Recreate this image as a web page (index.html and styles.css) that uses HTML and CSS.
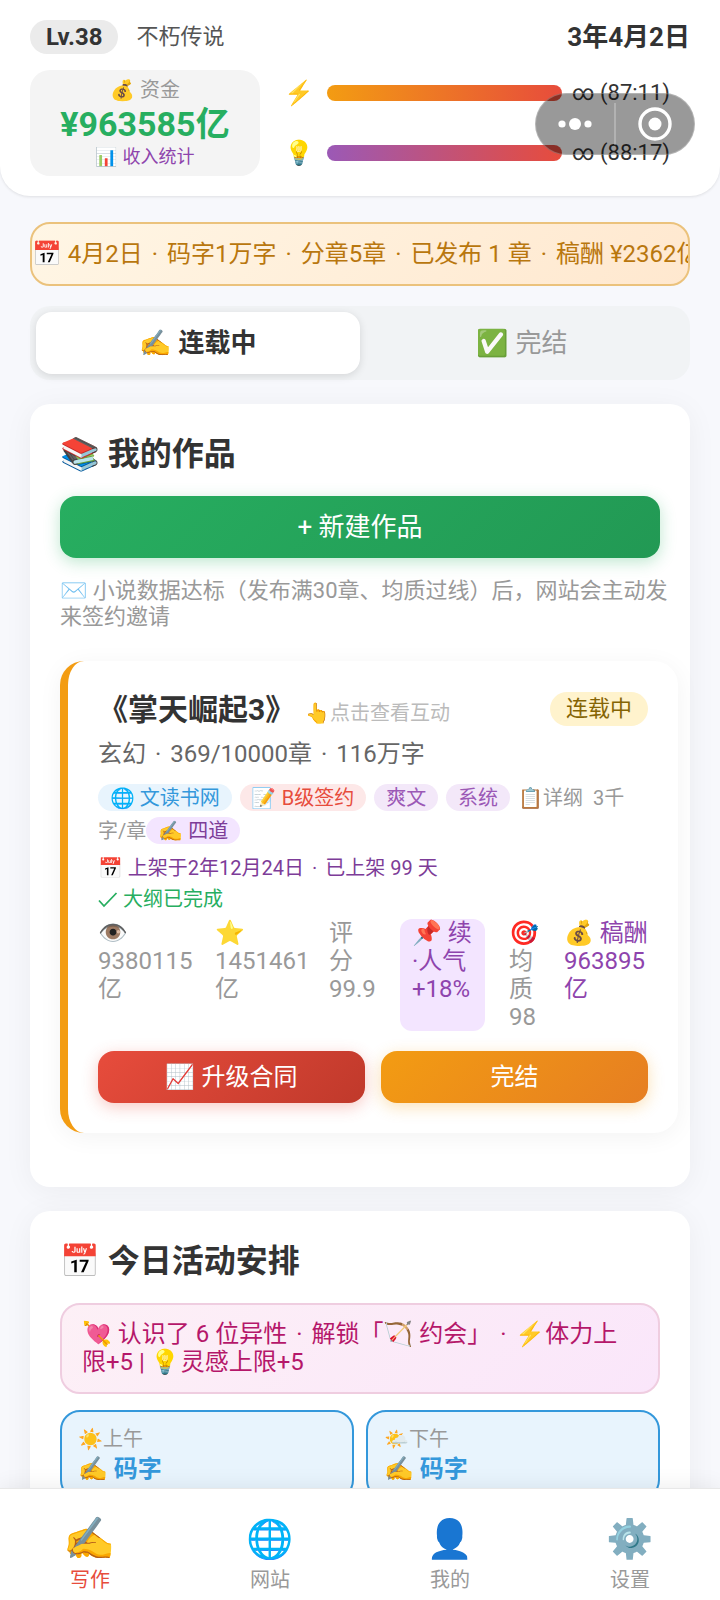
FILE: index.html
```html
<!DOCTYPE html>
<html lang="zh-CN">
<head>
    <meta charset="UTF-8">
    <meta name="viewport" content="width=device-width, initial-scale=1.0">
    <title>写作</title>
    <link rel="stylesheet" href="styles.css">
</head>
<body>

    <header class="header">
        <div class="header-top">
            <span class="level">Lv.38</span>
            <span class="rank">不朽传说</span>
            <span class="date">3年4月2日</span>
        </div>
        <div class="header-stats">
            <div class="money">
                <span class="money-label">💰 资金</span>
                <strong class="money-value">¥963585亿</strong>
                <a class="money-link" href="#income">📊 收入统计</a>
            </div>
            <div class="bars">
                <div class="bar-row">
                    <span class="bar-icon">⚡</span>
                    <div class="bar bar-energy"></div>
                    <span class="bar-text">∞ (87:11)</span>
                </div>
                <div class="bar-row">
                    <span class="bar-icon">💡</span>
                    <div class="bar bar-idea"></div>
                    <span class="bar-text">∞ (88:17)</span>
                </div>
            </div>
        </div>
        <!-- Mini program capsule, floats over the bars -->
        <div class="capsule">
            <button class="capsule-btn" aria-label="更多">
                <svg width="36" height="36" viewBox="0 0 36 36" fill="#fff">
                    <circle cx="5" cy="18" r="3.6"/>
                    <circle cx="18" cy="18" r="6"/>
                    <circle cx="31" cy="18" r="3.6"/>
                </svg>
            </button>
            <button class="capsule-btn" aria-label="关闭">
                <svg width="36" height="36" viewBox="0 0 36 36">
                    <circle cx="18" cy="18" r="15" fill="none" stroke="#fff" stroke-width="3.4"/>
                    <circle cx="18" cy="18" r="6.5" fill="#fff"/>
                </svg>
            </button>
        </div>
    </header>

    <main class="content">
        <div class="notice">📅 4月2日 <i class="dot">·</i> 码字1万字 <i class="dot">·</i> 分章5章 <i class="dot">·</i> 已发布 1 章 <i class="dot">·</i> 稿酬 ¥2362亿</div>

        <div class="tabs">
            <button class="tab active">✍️ 连载中</button>
            <button class="tab">✅ 完结</button>
        </div>

        <section class="card">
            <h2 class="card-title">📚 我的作品</h2>
            <button class="btn btn-new">+ 新建作品</button>
            <div class="works">
                <p class="tip">✉️ 小说数据达标（发布满30章、均质过线）后，网站会主动发来签约邀请</p>
                <article class="novel">
                    <div class="novel-head">
                        <h3 class="novel-title">《掌天崛起3》</h3>
                        <a class="novel-hint" href="#novel">👆点击查看互动</a>
                        <span class="status">连载中</span>
                    </div>
                    <p class="novel-meta">玄幻 <i class="dot">·</i> 369/10000章 <i class="dot">·</i> 116万字</p>
                    <p class="novel-tags">
                        <span class="tag tag-blue">🌐 文读书网</span>
                        <span class="tag tag-red">📝 B级签约</span>
                        <span class="tag tag-purple">爽文</span>
                        <span class="tag tag-purple">系统</span>
                        <span class="tag-plain">📋详纲</span>&nbsp; 3千<br>字/章<span class="tag tag-style">✍️ 四道</span>
                    </p>
                    <p class="novel-line purple">📅 上架于2年12月24日 <i class="dot">·</i> 已上架 99 天</p>
                    <p class="novel-line green">
                        <svg class="check" width="20" height="20" viewBox="0 0 20 20" fill="none" stroke="currentColor" stroke-width="1.8"><path d="M1 11.5 L6 17 L18.5 4"/></svg>
                        大纲已完成
                    </p>
                    <div class="novel-stats">
                        <span>👁️<br>9380115<br>亿</span>
                        <span>⭐<br>1451461<br>亿</span>
                        <span>评<br>分<br>99.9</span>
                        <span class="boost">📌 续<br>·人气<br>+18%</span>
                        <span>🎯<br>均<br>质<br>98</span>
                        <span class="income">💰 稿酬<br>963895<br>亿</span>
                    </div>
                    <div class="novel-actions">
                        <button class="btn btn-upgrade">📈 升级合同</button>
                        <button class="btn btn-finish">完结</button>
                    </div>
                </article>
            </div>
        </section>

        <section class="card">
            <h2 class="card-title">📅 今日活动安排</h2>
            <p class="unlock">💘 认识了 6 位异性 <i class="dot">·</i> 解锁「🏹 约会」 <i class="dot">·</i> ⚡体力上限+5 | 💡灵感上限+5</p>
            <div class="slots">
                <button class="slot">
                    <span class="slot-time">☀️上午</span>
                    <span class="slot-task">✍️ <b>码字</b></span>
                </button>
                <button class="slot">
                    <span class="slot-time">🌤️下午</span>
                    <span class="slot-task">✍️ <b>码字</b></span>
                </button>
            </div>
        </section>
    </main>

    <nav class="nav">
        <a class="nav-item active" href="#write"><span class="nav-icon">✍️</span>写作</a>
        <a class="nav-item" href="#site"><span class="nav-icon">🌐</span>网站</a>
        <a class="nav-item" href="#me"><span class="nav-icon">👤</span>我的</a>
        <a class="nav-item" href="#settings"><span class="nav-icon">⚙️</span>设置</a>
    </nav>

</body>
</html>
```

FILE: styles.css
```css
* {
    box-sizing: border-box;
    margin: 0;
    padding: 0;
}

body {
    height: 100vh;
    display: flex;
    flex-direction: column;
    overflow: hidden;
    background: #f7f8fc;
    color: #333;
    font-family: Roboto, "Noto Sans CJK SC", "Noto Color Emoji", sans-serif;
    font-size: 24px;
    line-height: 28px;
}

button {
    font: inherit;
    color: inherit;
    border: none;
    background: none;
    cursor: pointer;
}

a {
    color: inherit;
    text-decoration: none;
}

.dot {
    margin: 0 3px;
    font-style: normal;
}

/*--------------------
Header
--------------------*/
.header {
    position: relative;
    z-index: 2;
    padding: 20px 30px;
    background: #fff;
    border-radius: 0 0 30px 30px;
    box-shadow: 0 1px 3px rgba(0, 0, 0, 0.1);
}

.header-top {
    display: flex;
    align-items: center;
    gap: 18px;
    margin-bottom: 16px;
}

.level {
    padding: 0 16px;
    border-radius: 17px;
    background: #ebebeb;
    font-size: 24px;
    font-weight: bold;
    line-height: 34px;
}

.rank {
    font-size: 22px;
    color: #555;
}

.date {
    margin-left: auto;
    font-size: 26px;
    font-weight: bold;
}

.header-stats {
    display: flex;
    gap: 24px;
}

.money {
    flex: 0 0 230px;
    display: flex;
    flex-direction: column;
    align-items: center;
    padding: 8px;
    border-radius: 20px;
    background: #f4f4f4;
}

.money-label {
    font-size: 20px;
    line-height: 24px;
    color: #999;
}

.money-value {
    font-size: 34px;
    line-height: 44px;
    color: #27ae60;
}

.money-link {
    font-size: 18px;
    line-height: 22px;
    color: #8e44ad;
}

.bars {
    flex: 1;
    display: flex;
    flex-direction: column;
    justify-content: space-between;
    padding-right: 20px;
}

.bar-row {
    display: flex;
    align-items: center;
    height: 46px;
}

.bar-icon {
    width: 43px;
}

.bar {
    flex: 1;
    height: 16px;
    border-radius: 8px;
}

.bar-energy {
    background: linear-gradient(90deg, #f39c12, #e74c3c);
}

.bar-idea {
    background: linear-gradient(90deg, #9b59b6, #e74c3c);
}

.bar-text {
    width: 108px;
    text-align: right;
    font-size: 22px;
    line-height: 30px;
}

.capsule {
    position: absolute;
    top: 93px;
    right: 25px;
    display: flex;
    width: 160px;
    height: 62px;
    padding: 9px 0;
    border: 1px solid rgba(255, 255, 255, 0.25);
    border-radius: 31px;
    background: rgba(0, 0, 0, 0.4);
}

.capsule-btn {
    flex: 1;
    display: flex;
    align-items: center;
    justify-content: center;
}

.capsule-btn + .capsule-btn {
    border-left: 2px solid rgba(255, 255, 255, 0.25);
}

/*--------------------
Content
--------------------*/
.content {
    flex: 1;
    min-height: 0;
    overflow: hidden;
    display: flex;
    flex-direction: column;
    padding: 26px 30px 0;
}

.content > * {
    flex-shrink: 0;
}

.notice {
    padding: 16px 0;
    margin-bottom: 20px;
    border: 2px solid #ebc27c;
    border-radius: 20px;
    background: linear-gradient(135deg, #fff6e5, #ffe8cf);
    color: #b9770e;
    white-space: nowrap;
    overflow: hidden;
}

.tabs {
    display: flex;
    padding: 6px;
    margin-bottom: 24px;
    border-radius: 20px;
    background: #f1f3f5;
}

.tab {
    flex: 1;
    height: 62px;
    border-radius: 16px;
    font-size: 26px;
    color: #999;
}

.tab.active {
    background: #fff;
    color: #333;
    font-weight: bold;
    box-shadow: 0 2px 8px rgba(0, 0, 0, 0.12);
}

.card {
    padding: 30px;
    margin-bottom: 24px;
    border-radius: 20px;
    background: #fff;
    box-shadow: 0 4px 30px rgba(0, 0, 0, 0.05);
}

.card-title {
    margin-bottom: 22px;
    font-size: 32px;
    line-height: 40px;
}

.btn {
    border-radius: 16px;
    color: #fff;
}

.btn-new {
    width: 100%;
    height: 62px;
    font-size: 26px;
    background: linear-gradient(135deg, #27ae60, #229954);
    box-shadow: 0 4px 16px rgba(39, 174, 96, 0.3);
}

/* the list is a little wider than the card's padding box */
.works {
    margin-right: -18px;
    padding: 20px 0 24px;
}

.tip {
    margin-bottom: 31px;
    font-size: 22px;
    line-height: 26px;
    color: #999;
}

/*--------------------
Novel
--------------------*/
.novel {
    padding: 30px;
    border-left: 8px solid #f39c12;
    border-radius: 24px;
    background: #fff;
    box-shadow: 0 4px 24px rgba(0, 0, 0, 0.05);
}

.novel-head {
    display: flex;
    align-items: center;
    gap: 10px;
    margin-bottom: 12px;
}

.novel-title {
    padding-top: 2px;
    font-size: 30px;
    line-height: 34px;
}

.novel-hint {
    padding-top: 8px;
    font-size: 20px;
    color: #bbb;
}

.status {
    margin-left: auto;
    padding: 0 16px;
    border-radius: 17px;
    background: #fff3cd;
    color: #856404;
    font-size: 22px;
    line-height: 34px;
}

.novel-meta {
    margin-bottom: 13px;
    line-height: 30px;
    color: #666;
}

.novel-tags {
    margin-bottom: 5px;
    font-size: 20px;
    line-height: 33px;
    color: #999;
}

.tag {
    display: inline-block;
    padding: 2px 12px 0;
    margin-right: 3px;
    border-radius: 14px;
    line-height: 25px;
}

.tag-blue {
    background: #e8f4fd;
    color: #3498db;
}

.tag-red {
    background: #fde8e8;
    color: #e74c3c;
}

.tag-purple {
    background: #f3e8f9;
    color: #9b59b6;
}

.tag-style {
    background: #f3e5ff;
    color: #7d3c98;
}

.novel-line {
    font-size: 20px;
    line-height: 31px;
}

.check {
    vertical-align: -3px;
}

.purple {
    color: #7d3c98;
}

.green {
    color: #27ae60;
}

.novel-stats {
    display: grid;
    grid-template-columns: minmax(0, 93fr) minmax(0, 90fr) minmax(0, 47fr) minmax(0, 85fr) minmax(0, 31fr) minmax(0, 84fr);
    gap: 24px;
    margin: 4px 0 20px;
    color: #999;
    white-space: nowrap;
}

.boost {
    padding: 0 12px;
    border-radius: 12px;
    background: #f3e5ff;
    color: #8e44ad;
}

.income {
    color: #8e44ad;
}

.novel-actions {
    display: flex;
    gap: 16px;
}

.novel-actions .btn {
    flex: 1;
    height: 52px;
}

.btn-upgrade {
    background: linear-gradient(135deg, #e74c3c, #c0392b);
    box-shadow: 0 4px 16px rgba(231, 76, 60, 0.3);
}

.btn-finish {
    background: linear-gradient(135deg, #f39c12, #e67e22);
    box-shadow: 0 4px 16px rgba(243, 156, 18, 0.3);
}

/*--------------------
Activities
--------------------*/
.unlock {
    padding: 15px 20px 16px;
    margin-bottom: 16px;
    border: 2px solid #efcde0;
    border-radius: 20px;
    background: linear-gradient(135deg, #fdf0f6, #fae6fa);
    color: #b5176a;
}

.slots {
    display: grid;
    grid-template-columns: 1fr 1fr;
    gap: 12px;
}

.slot {
    display: flex;
    flex-direction: column;
    align-items: flex-start;
    padding: 13px 16px;
    border: 2px solid #3498db;
    border-radius: 20px;
    background: #e8f4fd;
}

.slot-time {
    font-size: 20px;
    color: #999;
}

.slot-task {
    line-height: 32px;
    color: #3498db;
}

/*--------------------
Bottom nav
--------------------*/
.nav {
    position: relative;
    z-index: 2;
    display: flex;
    height: 112px;
    padding-top: 22px;
    background: #fff;
    border-top: 1px solid #e8e8e8;
    box-shadow: 0 -2px 20px rgba(0, 0, 0, 0.07);
}

.nav-item {
    flex: 1;
    display: flex;
    flex-direction: column;
    align-items: center;
    font-size: 20px;
    line-height: 26px;
    color: #999;
}

.nav-icon {
    height: 56px;
    font-size: 38px;
    line-height: 56px;
}

.nav-item.active {
    color: #e74c3c;
}

.nav-item.active .nav-icon {
    font-size: 42px;
}
```
